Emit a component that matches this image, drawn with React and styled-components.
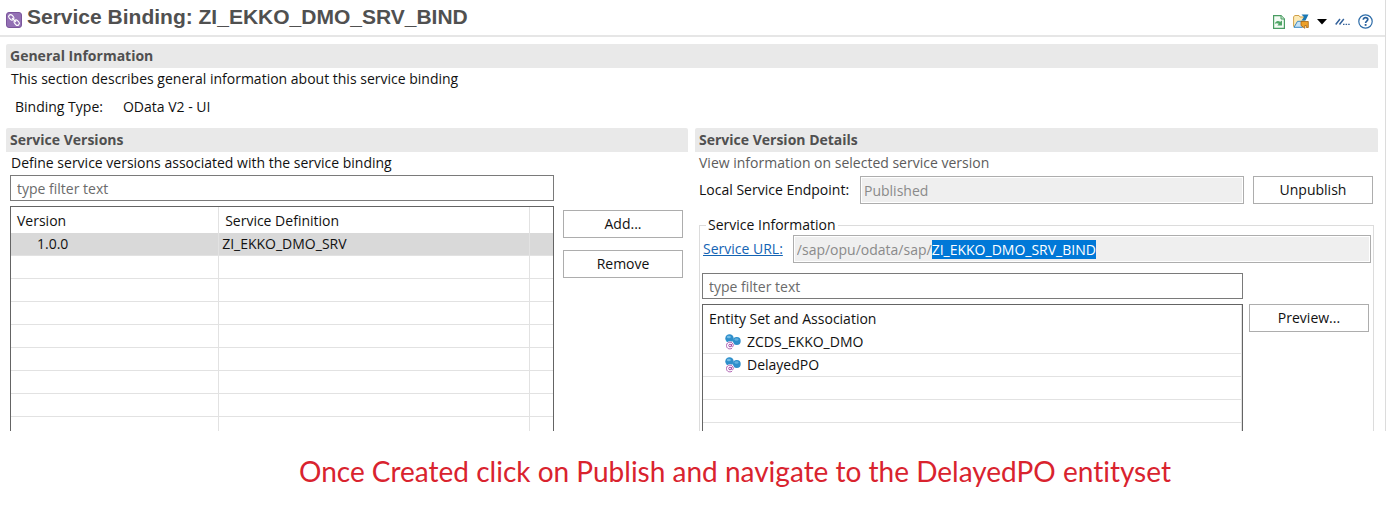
import React, { useEffect, useRef } from "react";
import styled, { createGlobalStyle } from "styled-components";

const GlobalStyle = createGlobalStyle`
  *, *::before, *::after { box-sizing: border-box; }
  body {
    margin: 0;
    background: #fff;
    color: #111;
    font-family: "Open Sans", "Noto Sans", sans-serif;
    font-size: 14px;
    line-height: 20px;
  }
  button, input { font: inherit; }
`;

const Editor = styled.main`
  margin-right: 7px;
  border-right: 1px solid #dcdcdc;
`;

const Header = styled.header`
  display: flex;
  align-items: center;
  justify-content: space-between;
  height: 37px;
  padding: 0 12px 0 6px;
  border-bottom: 2px solid #e6e6e6;
`;

const TitleGroup = styled.div`
  display: flex;
  align-items: center;
  gap: 5px;
  svg { margin-top: 4px; }
`;

const Title = styled.h1`
  margin: 0;
  color: #505050;
  font-family: "Liberation Sans", Arial, sans-serif;
  font-size: 21px;
  font-weight: 700;
  line-height: 24px;
  padding-bottom: 2px;
`;

const Toolbar = styled.div`
  display: flex;
  align-items: center;
  gap: 8px;
  padding-top: 8px;
`;

const ToolButton = styled.button`
  display: flex;
  padding: 0;
  border: 0;
  background: none;
`;

const Body = styled.div`
  padding: 7px 7px 0 6px;
`;

const SectionTitle = styled.h2`
  margin: 0;
  padding: 0 4px;
  border-radius: 2px 2px 0 0;
  background: #e9e9e9;
  color: #505050;
  font-size: 14px;
  font-weight: 700;
  line-height: 24px;
`;

const Description = styled.p`
  margin: 0;
  padding: 1px ${(p) => (p.$muted ? 4 : 5)}px 2px;
  color: ${(p) => (p.$muted ? "#5c5c5c" : "#111")};
`;

const BindingType = styled.dl`
  display: flex;
  gap: 20px;
  margin: 0;
  padding: 6px 9px 11px;
  dd { margin: 0; }
`;

const Columns = styled.div`
  display: grid;
  grid-template-columns: minmax(0, 1fr) calc(50% - 3px);
  gap: 7px;
`;

const Workspace = styled.div`
  display: grid;
  grid-template-columns: minmax(0, 1fr) 120px;
  column-gap: ${(p) => p.$gap}px;
  padding: ${(p) => p.$pad};
`;

const Stack = styled.div`
  display: flex;
  flex-direction: column;
  gap: 5px;
`;

const Actions = styled.div`
  display: flex;
  flex-direction: column;
  gap: 12px;
  padding-top: ${(p) => p.$top}px;
`;

const Button = styled.button`
  width: 120px;
  height: 28px;
  padding: 0;
  border: 1px solid #adadad;
  background: #fff;
  color: #111;
`;

const FilterInput = styled.input`
  width: 100%;
  height: 26px;
  padding: 0 6px;
  border: 1px solid #7a7a7a;
  background: #fff;
  &::placeholder { color: #6b6b6b; opacity: 1; }
`;

const ReadOnlyInput = styled.input`
  flex: 1;
  min-width: 0;
  height: 28px;
  padding: 0 3px;
  border: 1px solid #adadad;
  outline: 0;
  background: #efefef;
  box-shadow: inset 0 0 0 1px #fff;
  color: #8a8a8a;
  &::selection { background: #0078d7; color: #fff; }
`;

const Table = styled.table`
  width: 100%;
  table-layout: fixed;
  border: 1px solid #646464;
  border-bottom: 0;
  border-spacing: 0;
`;

const HeadCell = styled.th`
  height: 26px;
  padding: 2px 6px 0;
  border-right: 1px solid #e2e2e2;
  font-weight: 400;
  text-align: left;
  &:last-child { border-right-width: ${(p) => (p.$edge ? 1 : 0)}px; }
`;

const Row = styled.tr`
  height: ${(p) => (p.$short ? p.$short : 23)}px;
  background: ${(p) => (p.$selected ? "#d9d9d9" : "#fff")};
`;

const Cell = styled.td`
  padding: 0 0 0 ${(p) => p.$indent || 3}px;
  border-right: 1px solid #e2e2e2;
  border-bottom: ${(p) => (p.$open ? 0 : 1)}px solid #e2e2e2;
  line-height: 22px;
  &:last-child { border-right-width: ${(p) => (p.$edge ? 1 : 0)}px; }
`;

const EntityName = styled.span`
  display: flex;
  align-items: center;
  gap: 6px;
`;

const Endpoint = styled.div`
  display: flex;
  align-items: center;
  padding: 1px 5px 0 4px;
  gap: 9px;
  label { width: 152px; }
`;

const ServiceGroup = styled.fieldset`
  min-width: 0;
  margin: 11px 4px 0;
  padding: 0;
  border: 1px solid #dcdcdc;
  border-bottom: 0;
`;

const Legend = styled.legend`
  margin-left: 6px;
  padding: 0 2px;
`;

const UrlRow = styled.div`
  display: flex;
  align-items: center;
  gap: 10px;
  padding: 0 2px 0 3px;
`;

const UrlLink = styled.a`
  color: #1464b4;
`;

const Caption = styled.p`
  margin: 0;
  padding: 20px 0 20px 77px;
  color: #d9232e;
  font-family: Lato, Calibri, sans-serif;
  font-size: 28px;
  font-variant-ligatures: none;
  line-height: 40px;
  text-align: center;
`;

const BindingIcon = () => (
  <svg width="16" height="16" viewBox="0 0 16 16" aria-hidden="true">
    <rect x="0.5" y="0.5" width="15" height="15" rx="2.5" fill="#9370b4" stroke="#7b559b" />
    <g fill="none" stroke="#fff" strokeWidth="1.1">
      <rect x="2.400" y="3.300" width="5.800" height="4" rx="2" transform="rotate(45 5.300 5.300)" />
      <rect x="7.800" y="8.700" width="5.800" height="4" rx="2" transform="rotate(45 10.700 10.700)" />
      <path d="M6 6l4 4" />
    </g>
  </svg>
);

const RefreshIcon = () => (
  <svg width="12" height="14" viewBox="0 0 12 14" aria-hidden="true">
    <path d="M.6.6H8L11.400 4v9.400H.6z" fill="#f3fbf4" stroke="#4a9d62" strokeWidth="1.2" />
    <path d="M8 .7V4h3.3" fill="#cde8d3" stroke="#4a9d62" />
    <path d="M1.800 8.800C2.600 6 5 5.200 7.300 6.800L9 5.400v5H4.300l1.500-1.600C4.500 7.900 3 7.900 1.800 8.800z" fill="#4fa566" />
  </svg>
);

const ShareIcon = () => (
  <svg width="16" height="15" viewBox="0 0 16 15" aria-hidden="true">
    <path d="M.6 12.400V2.600L2 1.500h4l1 1.500h4v9.400z" fill="#fdeab5" stroke="#d0a04a" />
    <path d="M1 13.300l3.500-6h5v6z" fill="#c4e2f7" stroke="#3a87c0" />
    <path d="M8.500.5H15.500L12.500 6.500H8.500L11 3z" fill="#1b78b4" />
    <path d="M8 7.500h7.300v6h-2v-2h-1.500v2.800L8 11.500z" fill="#eda12a" stroke="#a8650e" strokeWidth=".8" />
  </svg>
);

const CaretIcon = () => (
  <svg width="10" height="6" viewBox="0 0 10 6" aria-hidden="true">
    <path d="M0 0h10L5 5.500z" fill="#000" />
  </svg>
);

const LinesIcon = () => (
  <svg width="15" height="8" viewBox="0 0 15 8" aria-hidden="true">
    <path d="M.7 6.500L5 1M4.500 6.500L8.800 1" stroke="#34629b" strokeWidth="1.500" />
    <path d="M8 6.300h1.500M10.600 6.300h1.500M13.200 6.300h1.500" stroke="#34629b" strokeWidth="1.200" />
  </svg>
);

const HelpIcon = () => (
  <svg width="15" height="15" viewBox="0 0 15 15" aria-hidden="true">
    <circle cx="7.500" cy="7.500" r="6.700" fill="#fff" stroke="#2d6ca8" strokeWidth="1.200" />
    <path d="M5.300 5.800c0-3 4.500-2.700 4.500-.2 0 1.500-2.200 1.500-2.200 3.300" fill="none" stroke="#28609c" strokeWidth="1.700" />
    <rect x="6.700" y="10" width="1.800" height="1.800" fill="#28609c" />
  </svg>
);

const EntityIcon = () => (
  <svg width="16" height="16" viewBox="0 0 16 16" aria-hidden="true">
    <circle cx="4.500" cy="4.500" r="4.200" fill="#2e8fcb" />
    <circle cx="11.800" cy="7" r="3.900" fill="#2e8fcb" />
    <ellipse cx="3.800" cy="3" rx="2" ry="1.300" fill="#74bce6" />
    <ellipse cx="11.500" cy="5.500" rx="2" ry="1.200" fill="#62b1e0" />
    <circle cx="5" cy="11.500" r="4.300" fill="#fff" />
    <circle cx="5" cy="11.500" r="1.300" fill="none" stroke="#a54ca8" />
    <path d="M6.500 10v2.300c.3 1 1.800.5 1.800-.8 0-4.500-6.800-4.400-6.800 0 0 3.300 3.200 4 5.500 2.800" fill="none" stroke="#a54ca8" strokeWidth=".9" />
  </svg>
);

const EMPTY_ROWS = [0, 1, 2, 3, 4, 5, 6];
const ENTITIES = ["ZCDS_EKKO_DMO", "DelayedPO"];
const SERVICE_URL = "/sap/opu/odata/sap/ZI_EKKO_DMO_SRV_BIND";

function ServiceVersions() {
  return (
    <section>
      <SectionTitle>Service Versions</SectionTitle>
      <Description>Define service versions associated with the service binding</Description>
      <Workspace $gap={9} $pad="0 5px 0 4px">
        <Stack>
          <FilterInput aria-label="Filter versions" placeholder="type filter text" />
          <Table>
            <colgroup>
              <col style={{ width: "38.4%" }} />
              <col />
              <col style={{ width: 23 }} />
            </colgroup>
            <thead>
              <tr>
                <HeadCell>Version</HeadCell>
                <HeadCell>Service Definition</HeadCell>
                <HeadCell />
              </tr>
            </thead>
            <tbody>
              <Row $selected>
                <Cell $indent={26}>1.0.0</Cell>
                <Cell>ZI_EKKO_DMO_SRV</Cell>
                <Cell />
              </Row>
              {EMPTY_ROWS.map((n) => (
                <Row key={n}><Cell /><Cell /><Cell /></Row>
              ))}
              <Row $short={14}><Cell $open /><Cell $open /><Cell $open /></Row>
            </tbody>
          </Table>
        </Stack>
        <Actions $top={35}>
          <Button type="button">Add...</Button>
          <Button type="button">Remove</Button>
        </Actions>
      </Workspace>
    </section>
  );
}

function ServiceVersionDetails() {
  const urlRef = useRef(null);
  useEffect(() => {
    const input = urlRef.current;
    input.focus({ preventScroll: true });
    input.setSelectionRange(SERVICE_URL.lastIndexOf("/") + 1, SERVICE_URL.length);
  }, []);

  return (
    <section>
      <SectionTitle>Service Version Details</SectionTitle>
      <Description $muted>View information on selected service version</Description>
      <Endpoint>
        <label htmlFor="endpoint">Local Service Endpoint:</label>
        <ReadOnlyInput id="endpoint" readOnly value="Published" />
        <Button type="button">Unpublish</Button>
      </Endpoint>
      <ServiceGroup>
        <Legend>Service Information</Legend>
        <UrlRow>
          <UrlLink href="#service" id="service-url">Service URL:</UrlLink>
          <ReadOnlyInput ref={urlRef} aria-labelledby="service-url" readOnly value={SERVICE_URL} />
        </UrlRow>
        <Workspace $gap={6} $pad="10px 4px 0 2px">
          <Stack>
            <FilterInput aria-label="Filter entity sets" placeholder="type filter text" />
            <Table>
              <thead>
                <tr><HeadCell $edge>Entity Set and Association</HeadCell></tr>
              </thead>
              <tbody>
                {ENTITIES.map((name) => (
                  <Row key={name}>
                    <Cell $indent={22} $edge>
                      <EntityName><EntityIcon />{name}</EntityName>
                    </Cell>
                  </Row>
                ))}
                <Row><Cell $edge /></Row>
                <Row><Cell $edge /></Row>
                <Row $short={8}><Cell $edge $open /></Row>
              </tbody>
            </Table>
          </Stack>
          <Actions $top={31}>
            <Button type="button">Preview...</Button>
          </Actions>
        </Workspace>
      </ServiceGroup>
    </section>
  );
}

export default function App() {
  return (
    <>
      <GlobalStyle />
      <Editor>
        <Header>
          <TitleGroup>
            <BindingIcon />
            <Title>Service Binding: ZI_EKKO_DMO_SRV_BIND</Title>
          </TitleGroup>
          <Toolbar>
            <ToolButton type="button" aria-label="Refresh"><RefreshIcon /></ToolButton>
            <ToolButton type="button" aria-label="Share"><ShareIcon /></ToolButton>
            <ToolButton type="button" aria-label="More options"><CaretIcon /></ToolButton>
            <ToolButton type="button" aria-label="Show path"><LinesIcon /></ToolButton>
            <ToolButton type="button" aria-label="Help"><HelpIcon /></ToolButton>
          </Toolbar>
        </Header>
        <Body>
          <section>
            <SectionTitle>General Information</SectionTitle>
            <Description>This section describes general information about this service binding</Description>
            <BindingType>
              <dt>Binding Type:</dt>
              <dd>OData V2 - UI</dd>
            </BindingType>
          </section>
          <Columns>
            <ServiceVersions />
            <ServiceVersionDetails />
          </Columns>
        </Body>
      </Editor>
      <Caption>Once Created click on Publish and navigate to the DelayedPO entityset</Caption>
    </>
  );
}
